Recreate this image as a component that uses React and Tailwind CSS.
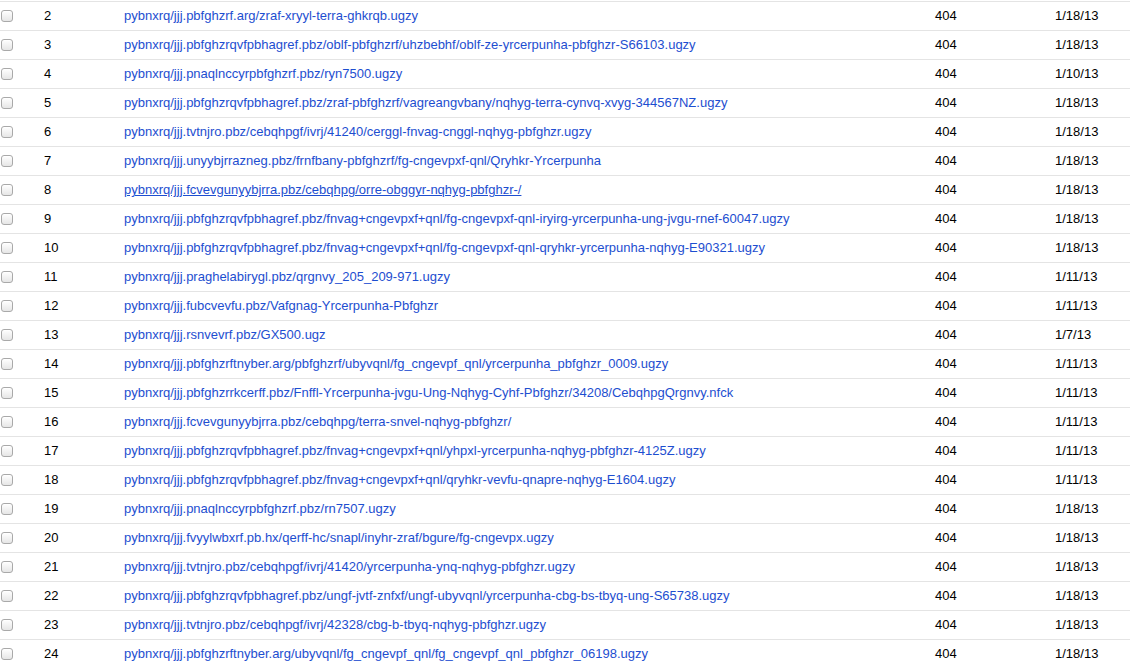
import React from 'react';

const rows = [
  [2, 'pybnxrq/jjj.pbfghzrf.arg/zraf-xryyl-terra-ghkrqb.ugzy', '1/18/13'],
  [3, 'pybnxrq/jjj.pbfghzrqvfpbhagref.pbz/oblf-pbfghzrf/uhzbebhf/oblf-ze-yrcerpunha-pbfghzr-S66103.ugzy', '1/18/13'],
  [4, 'pybnxrq/jjj.pnaqlnccyrpbfghzrf.pbz/ryn7500.ugzy', '1/10/13'],
  [5, 'pybnxrq/jjj.pbfghzrqvfpbhagref.pbz/zraf-pbfghzrf/vagreangvbany/nqhyg-terra-cynvq-xvyg-344567NZ.ugzy', '1/18/13'],
  [6, 'pybnxrq/jjj.tvtnjro.pbz/cebqhpgf/ivrj/41240/cerggl-fnvag-cnggl-nqhyg-pbfghzr.ugzy', '1/18/13'],
  [7, 'pybnxrq/jjj.unyybjrrazneg.pbz/frnfbany-pbfghzrf/fg-cngevpxf-qnl/Qryhkr-Yrcerpunha', '1/18/13'],
  [8, 'pybnxrq/jjj.fcvevgunyybjrra.pbz/cebqhpg/orre-obggyr-nqhyg-pbfghzr-/', '1/18/13', true],
  [9, 'pybnxrq/jjj.pbfghzrqvfpbhagref.pbz/fnvag+cngevpxf+qnl/fg-cngevpxf-qnl-iryirg-yrcerpunha-ung-jvgu-rnef-60047.ugzy', '1/18/13'],
  [10, 'pybnxrq/jjj.pbfghzrqvfpbhagref.pbz/fnvag+cngevpxf+qnl/fg-cngevpxf-qnl-qryhkr-yrcerpunha-nqhyg-E90321.ugzy', '1/18/13'],
  [11, 'pybnxrq/jjj.praghelabirygl.pbz/qrgnvy_205_209-971.ugzy', '1/11/13'],
  [12, 'pybnxrq/jjj.fubcvevfu.pbz/Vafgnag-Yrcerpunha-Pbfghzr', '1/11/13'],
  [13, 'pybnxrq/jjj.rsnvevrf.pbz/GX500.ugz', '1/7/13'],
  [14, 'pybnxrq/jjj.pbfghzrftnyber.arg/pbfghzrf/ubyvqnl/fg_cngevpf_qnl/yrcerpunha_pbfghzr_0009.ugzy', '1/11/13'],
  [15, 'pybnxrq/jjj.pbfghzrrkcerff.pbz/Fnffl-Yrcerpunha-jvgu-Ung-Nqhyg-Cyhf-Pbfghzr/34208/CebqhpgQrgnvy.nfck', '1/11/13'],
  [16, 'pybnxrq/jjj.fcvevgunyybjrra.pbz/cebqhpg/terra-snvel-nqhyg-pbfghzr/', '1/11/13'],
  [17, 'pybnxrq/jjj.pbfghzrqvfpbhagref.pbz/fnvag+cngevpxf+qnl/yhpxl-yrcerpunha-nqhyg-pbfghzr-4125Z.ugzy', '1/11/13'],
  [18, 'pybnxrq/jjj.pbfghzrqvfpbhagref.pbz/fnvag+cngevpxf+qnl/qryhkr-vevfu-qnapre-nqhyg-E1604.ugzy', '1/11/13'],
  [19, 'pybnxrq/jjj.pnaqlnccyrpbfghzrf.pbz/rn7507.ugzy', '1/18/13'],
  [20, 'pybnxrq/jjj.fvyylwbxrf.pb.hx/qerff-hc/snapl/inyhr-zraf/bgure/fg-cngevpx.ugzy', '1/18/13'],
  [21, 'pybnxrq/jjj.tvtnjro.pbz/cebqhpgf/ivrj/41420/yrcerpunha-ynq-nqhyg-pbfghzr.ugzy', '1/18/13'],
  [22, 'pybnxrq/jjj.pbfghzrqvfpbhagref.pbz/ungf-jvtf-znfxf/ungf-ubyvqnl/yrcerpunha-cbg-bs-tbyq-ung-S65738.ugzy', '1/18/13'],
  [23, 'pybnxrq/jjj.tvtnjro.pbz/cebqhpgf/ivrj/42328/cbg-b-tbyq-nqhyg-pbfghzr.ugzy', '1/18/13'],
  [24, 'pybnxrq/jjj.pbfghzrftnyber.arg/ubyvqnl/fg_cngevpf_qnl/fg_cngevpf_qnl_pbfghzr_06198.ugzy', '1/18/13'],
];

const Checkbox = () => (
  <span className="block w-[12px] h-[12px] rounded-[3px] border border-[#a9a9a9] bg-gradient-to-b from-white to-[#e6e6e6] shadow-[inset_0_1px_0_#fff]" />
);

const App = () => {
  return (
    <div className="w-[1130px] h-[663px] overflow-hidden bg-white pt-px font-['Liberation_Sans',Arial,sans-serif] text-[13px] text-black">
      {rows.map(([num, url, date, hover]) => (
        <div key={num} className="flex items-center h-[29px] border-t border-[#e4e4e4]">
          {/* checkbox column */}
          <div className="w-[44px] pl-[1px]">
            <Checkbox />
          </div>
          <div className="w-[80px]">{num}</div>
          <div className="flex-1 min-w-0 truncate">
            <a href="#" className={`text-[#1d4ed0] ${hover ? 'underline' : 'no-underline'}`}>{url}</a>
          </div>
          <div className="w-[120px]">404</div>
          <div className="w-[75px]">{date}</div>
        </div>
      ))}
    </div>
  );
};

export default App;
